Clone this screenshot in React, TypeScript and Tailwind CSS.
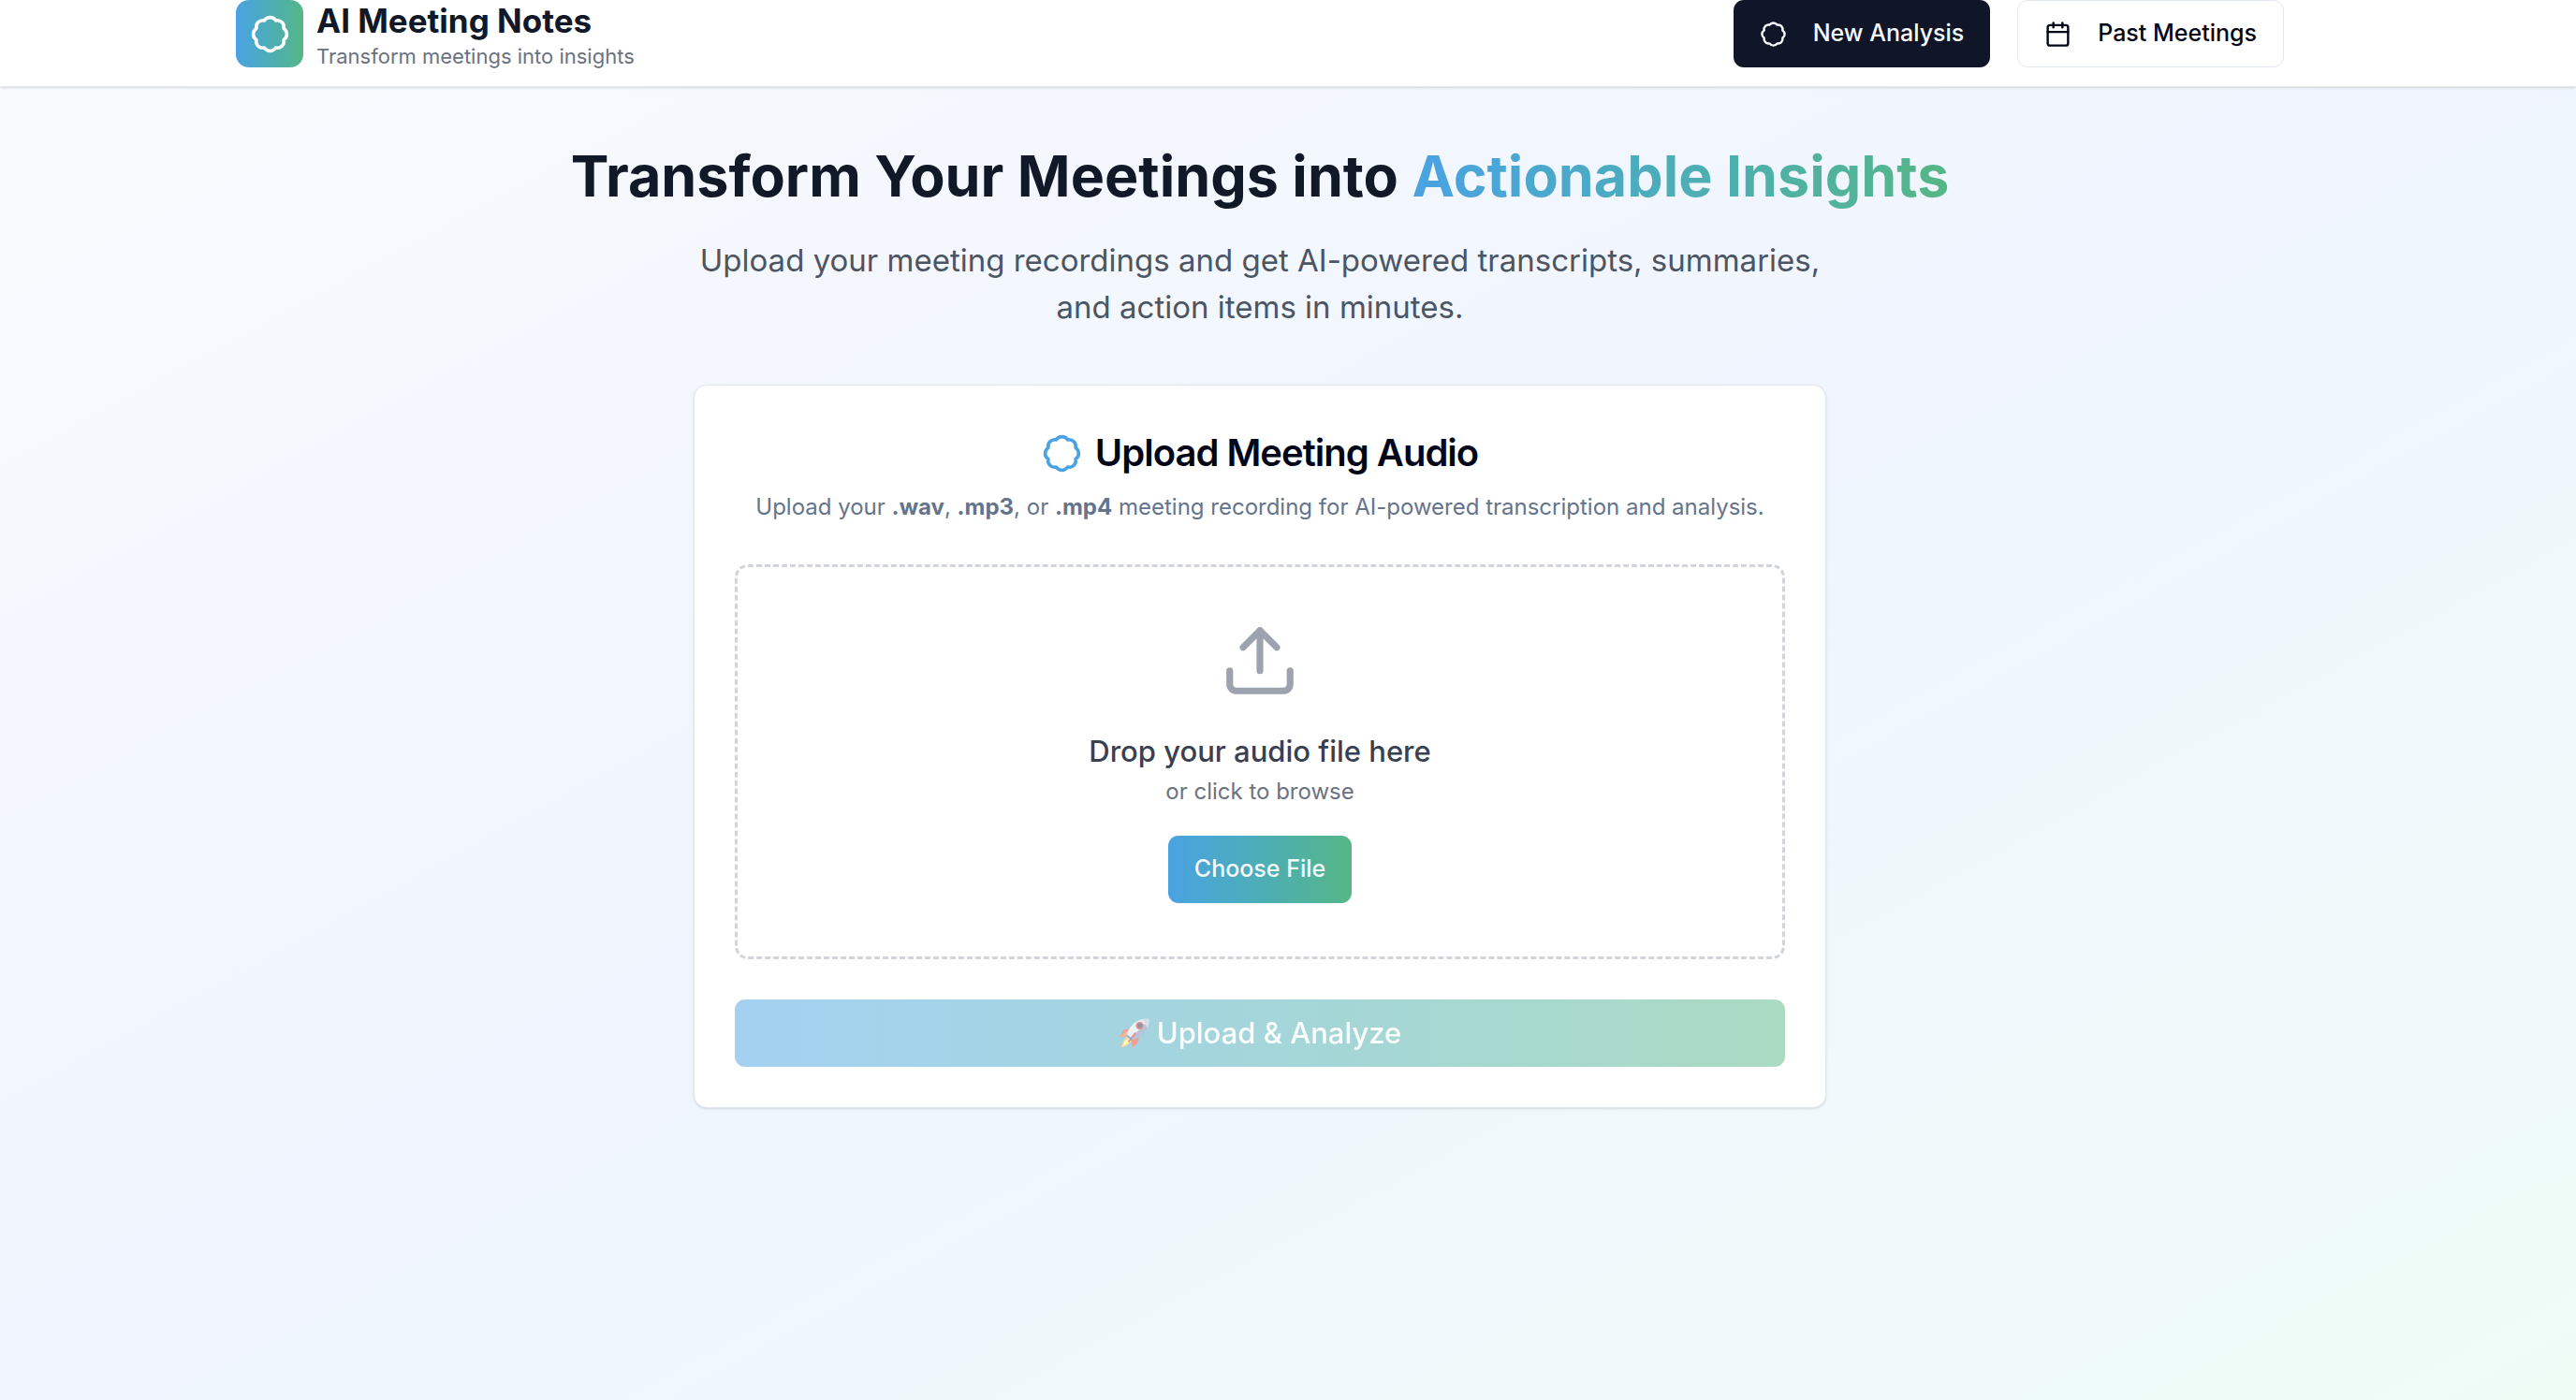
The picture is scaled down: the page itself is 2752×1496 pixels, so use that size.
import { useRef } from "react";
import { Badge, Calendar, Upload } from "lucide-react";

function Rocket() {
  return (
    <svg viewBox="0 0 36 36" className="size-[34px]" aria-hidden="true">
      <path d="M1 22L6 14.500q1-1 3-1l7-.5-6 9z" fill="#e8402f" />
      <path d="M1 22l9-7 2 0-3 6z" fill="#f0742e" />
      <path d="M23 19l-.5 8q0 1.500-1 2.500L16 34l-2.500-8z" fill="#e8402f" />
      <path d="M11 21C6 24 4 29 3 34c5-.5 10-3 12-8z" fill="#f5a92b" />
      <path d="M11.500 23c-4 2-6 5.500-7 9.500 4-1 7-3 9-6.500z" fill="#fdf08a" />
      <path d="M34.500 2C22 0 12 9 8.500 21l5.500 5.500C28 22 37 13 34.500 2z" fill="#6f8cb5" />
      <path d="M34.500 2C22 0 12 9 8.500 21l3 3C21 17 29 9 34.500 2z" fill="#dfe5ee" />
      <path d="M34.500 2c-3.500-.6-6.500 0-9.500 1.500 3 1.500 6 4.500 7.500 8.500 2-3 2.700-6.500 2-10z" fill="#aebfd6" />
      <path d="M8.500 21l5.500 5.500 2-1-6-6z" fill="#3c5f94" />
      <circle cx="24" cy="9.500" r="4.500" fill="#c8392f" />
      <circle cx="24" cy="9.500" r="3" fill="#2c2f3a" />
      <path d="M18.500 17l1.500 1.500-8.500 10-1-1z" fill="#b3261e" />
    </svg>
  );
}

export default function App() {
  const fileInput = useRef<HTMLInputElement>(null);

  return (
    <div className="min-h-screen bg-linear-to-br from-[#f8fafc] via-[#f0f5ff] to-[#effcf6] font-['Inter',sans-serif] antialiased">
      <header className="border-b border-gray-200 bg-white pr-[60px] pb-5 shadow-sm">
        <div className="mx-auto flex h-[72px] max-w-[2304px] items-center justify-between px-[58px]">
          <div className="flex items-center gap-[14px]">
            <div className="flex size-[72px] items-center justify-center rounded-[14px] bg-linear-to-r from-[#4aa2e3] to-[#55b685]">
              <Badge className="size-[43px] text-white" />
            </div>
            <div>
              <p className="text-[35px] leading-[48px] font-bold text-[#111827]">AI Meeting Notes</p>
              <p className="text-[22px] leading-7 text-[#6b7280]">Transform meetings into insights</p>
            </div>
          </div>
          <nav className="flex gap-[29px]">
            <button className="flex h-[72px] items-center gap-7 rounded-[11px] bg-[#111528] px-7 text-[25px] font-medium text-slate-50">
              <Badge className="size-[29px]" />
              New Analysis
            </button>
            <button className="flex h-[72px] items-center gap-7 rounded-[11px] border border-slate-200 bg-white px-7 text-[25px] font-medium text-slate-950">
              <Calendar className="size-[29px]" />
              Past Meetings
            </button>
          </nav>
        </div>
      </header>

      <main className="flex flex-col items-center py-[59px] pr-[60px]">
        <h1 className="mb-[29px] text-center text-[61px] leading-[72px] font-bold text-[#111827]">
          Transform Your Meetings into{" "}
          <span className="bg-linear-to-r from-[#4aa2e3] to-[#55b685] bg-clip-text text-transparent">
            Actionable Insights
          </span>
        </h1>
        <p className="mb-[58px] max-w-[1260px] text-center text-[33px] leading-[50px] text-[#4b5563]">
          Upload your meeting recordings and get AI-powered transcripts, summaries,
          <br />
          and action items in minutes.
        </p>

        <section className="w-full max-w-[1210px] rounded-[14px] border border-slate-200 bg-white p-[43px] shadow-sm">
          <h2 className="mb-[11px] flex items-center justify-center gap-[14px] text-[40px] leading-[58px] font-semibold tracking-tight text-slate-950">
            <Badge className="size-[43px] text-[#4aa2e3]" />
            Upload Meeting Audio
          </h2>
          <p className="mb-[43px] text-center text-[24px] leading-9 text-[#64748b]">
            Upload your <strong>.wav</strong>, <strong>.mp3</strong>, or <strong>.mp4</strong> meeting recording for
            AI-powered transcription and analysis.
          </p>

          <div className="mb-[43px] flex flex-col items-center rounded-[14px] border-3 border-dashed border-[#d1d5db] p-[57px]">
            <Upload className="mb-[29px] size-[86px] text-[#9ca3af]" />
            <p className="text-[31px] leading-[50px] font-medium text-[#374151]">Drop your audio file here</p>
            <p className="mb-[29px] text-[24px] leading-9 text-[#6b7280]">or click to browse</p>
            <input ref={fileInput} type="file" accept=".wav,.mp3,.mp4" aria-label="Audio file" className="hidden" />
            <button
              onClick={() => fileInput.current?.click()}
              className="h-[72px] rounded-[11px] bg-linear-to-r from-[#4aa2e3] to-[#55b685] px-7 text-[25px] font-medium text-slate-50"
            >
              Choose File
            </button>
          </div>

          <button
            disabled
            className="flex h-[72px] w-full items-center justify-center gap-[7px] rounded-[11px] bg-linear-to-r from-[#4aa2e3] to-[#55b685] text-[31px] font-medium text-slate-50 opacity-50"
          >
            <Rocket />
            Upload &amp; Analyze
          </button>
        </section>
      </main>
    </div>
  );
}
